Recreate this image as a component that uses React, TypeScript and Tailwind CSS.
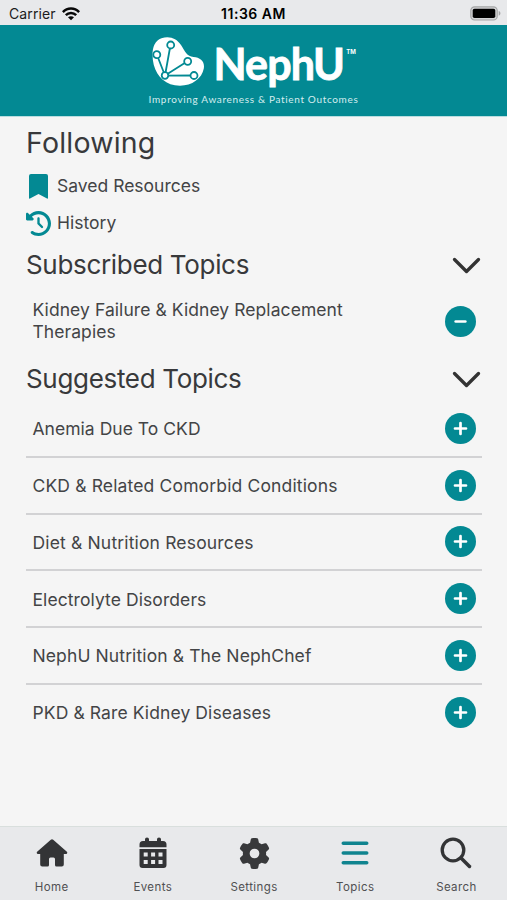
import type { ReactNode } from "react";
import { FaClockRotateLeft, FaGear } from "react-icons/fa6";

const suggested = [
  { title: "Anemia Due To CKD", tracking: "tracking-[0.03px]" },
  { title: "CKD & Related Comorbid Conditions", tracking: "tracking-[0.15px]" },
  { title: "Diet & Nutrition Resources", tracking: "tracking-[0.16px]" },
  { title: "Electrolyte Disorders", tracking: "tracking-[0.08px]" },
  { title: "NephU Nutrition & The NephChef", tracking: "tracking-[0.11px]" },
  { title: "PKD & Rare Kidney Diseases", tracking: "tracking-[0.1px]" },
];

function StatusBar() {
  return (
    <div className="grid h-[25px] shrink-0 grid-cols-3 items-center bg-[#e8e9eb] pt-[2px] text-[14px] leading-none text-[#1c1c1c]">
      <div className="flex items-center gap-[6px] pl-[9px]">
        <span className="tracking-[0.1px]">Carrier</span>
        <svg width="18" height="14" viewBox="0 0 18 14" fill="none" stroke="#080808" strokeWidth="2.5">
          <path d="M.9 5.1C5.3.4 12.7.4 17.1 5.1" />
          <path d="M3.8 8.1c2.9-2.9 7.5-2.9 10.4 0" />
          <path d="M6 10.2c1.7-1.4 4.3-1.4 6 0L9 13.3Z" fill="#080808" stroke="none" />
        </svg>
      </div>
      <span className="text-center font-semibold tracking-[0.5px] text-black">11:36 AM</span>
      <svg className="mr-[6px] justify-self-end" width="31" height="15" viewBox="0 0 31 15">
        <rect x=".8" y=".8" width="26.4" height="13.2" rx="3.8" fill="#d4d5d6" stroke="#a5a6a7" strokeWidth="1.2" />
        <rect x="2.7" y="2.7" width="22.6" height="9.4" rx="1.8" fill="#000" />
        <path d="M28.7 5.1c2.3.7 2.3 4 0 4.7Z" fill="#a5a6a7" />
      </svg>
    </div>
  );
}

function KidneyLogo() {
  return (
    <svg width="54" height="50" viewBox="0 0 54 50" className="shrink-0">
      <path
        d="M9.500 1.200C18-1.200 24.500 1.500 29 8C33 14.500 35 19.500 41.500 20C48.500 20.500 53 24.500 51.800 31.500C50 41.500 40 48.700 28 48.700C14 48.700 5 40 1.800 28C-.8 17 0 4.500 9.500 1.200Z"
        fill="#fff"
      />
      <g fill="#fff" stroke="#038993" strokeWidth="1.8">
        <path d="M13 38.500 4.800 17.500M13 38.500 18.500 8M13 38.500 35.500 24.300M13 38.700 42 38.500" />
        <circle cx="4.800" cy="17.700" r="3.500" />
        <circle cx="18.700" cy="8" r="3.500" />
        <circle cx="35.700" cy="24.300" r="3.500" />
        <circle cx="42" cy="38.500" r="3.500" />
        <circle cx="13" cy="38.500" r="3.300" />
      </g>
    </svg>
  );
}

function Header() {
  return (
    <header className="flex h-[92px] shrink-0 flex-col items-center border-b border-[#b9dde0] bg-[#038993] pt-[12px] text-white">
      <div className="flex h-[50px] w-[204px] items-start">
        <KidneyLogo />
        <span className="ml-[8px] mt-[2px] font-['Lato','Liberation_Sans',sans-serif] text-[43px] font-bold leading-[50px] tracking-[-0.9px] [-webkit-text-stroke:0.8px_white]">
          NephU
        </span>
        <span className="ml-[2px] mt-[12px] text-[6px] font-bold leading-none">TM</span>
      </div>
      <p className="mt-[5px] whitespace-nowrap font-['Lato','Liberation_Sans',sans-serif] text-[10px] leading-[14px] tracking-[0.66px] text-[#d5edef]">
        Improving Awareness &amp; Patient Outcomes
      </p>
    </header>
  );
}

function SectionTitle({ children }: { children: ReactNode }) {
  return (
    <div className="flex h-[34px] items-center justify-between">
      <h2 className="text-[26px] leading-[34px] tracking-[-0.32px]">{children}</h2>
      <svg width="30" height="18" viewBox="0 0 30 18" fill="none" stroke="#333" strokeWidth="3.300" strokeLinecap="round" strokeLinejoin="round">
        <path d="m2.500 3.500 12 12 12-12" />
      </svg>
    </div>
  );
}

function RoundButton({ kind }: { kind: "add" | "remove" }) {
  return (
    <button aria-label={kind} className="grid size-[31px] shrink-0 place-items-center rounded-full bg-[#038993]">
      <svg width="15" height="15" viewBox="0 0 15 15" stroke="#fff" strokeWidth="2.700" strokeLinecap="round">
        {kind === "add" ? <path d="M2 7.500h11M7.500 2v11" /> : <path d="M2.700 7.500h9.600" />}
      </svg>
    </button>
  );
}

function NavItem({ label, children }: { label: string; children: ReactNode }) {
  return (
    <button className="flex flex-1 flex-col items-center pt-[9px]">
      <span className="grid h-[34px] place-items-center">{children}</span>
      <span className="mt-[9px] text-[11.500px] leading-[16px] tracking-[0.4px] text-[#505052]">{label}</span>
    </button>
  );
}

export default function App() {
  return (
    <div className="flex h-[900px] w-[507px] flex-col overflow-hidden bg-[#f5f5f5] font-['Inter','Liberation_Sans',sans-serif] text-[#38393b]">
      <StatusBar />
      <Header />
      <main className="flex-1 pr-[25px] pl-[26px] pt-[7px]">
        <h1 className="text-[28.500px] leading-[38px] tracking-[0.2px]">Following</h1>
        <div className="mt-[6px] flex h-[37px] items-center text-[17.500px] text-[#434446]">
          <svg className="mr-[9px] ml-[3px]" width="19" height="25" viewBox="0 0 19 25">
            <path d="M0 2q0-2 2-2h15q2 0 2 2v22q0 1-1 .6L9.500 20 1 24.600q-1 .4-1-.6Z" fill="#038993" />
          </svg>
          <span>Saved Resources</span>
        </div>
        <div className="flex h-[36px] items-center text-[17.500px] text-[#434446]">
          <FaClockRotateLeft className="mr-[6px] size-[25px] text-[#038993]" />
          <span>History</span>
        </div>
        <section className="mt-[7px]">
          <SectionTitle>Subscribed Topics</SectionTitle>
          <div className="mt-[17px] flex items-center justify-between pr-[6px] pl-[6.500px]">
            <p className="w-[340px] text-[17.500px] leading-[22px] tracking-[0.07px] text-[#434446]">Kidney Failure &amp; Kidney Replacement Therapies</p>
            <RoundButton kind="remove" />
          </div>
        </section>
        <section className="mt-[19px]">
          <SectionTitle>Suggested Topics</SectionTitle>
          <ul className="mt-[5px]">
            {suggested.map(({ title, tracking }) => (
              <li key={title} className="flex h-[56.800px] items-center justify-between border-b-2 border-[#d2d2d4] pr-[6px] pl-[6.500px] last:border-transparent">
                <span className={`pt-[2px] text-[17.500px] text-[#434446] ${tracking}`}>{title}</span>
                <RoundButton kind="add" />
              </li>
            ))}
          </ul>
        </section>
      </main>
      <nav className="flex h-[74px] shrink-0 border-t border-[#d9dfdd] bg-[#e8e9eb] pl-px">
        <NavItem label="Home">
          <svg width="32" height="28" viewBox="0 0 32 28" fill="#333436">
            <path d="M14.800.8q1.200-1 2.400 0L30.600 12.600q1.100 1 .4 1.800-.5.700-1.600.600h-1.600v10.500q0 2-2 2h-5.300q-1.500 0-1.500-1.500v-6q0-1.500-1.500-1.500h-3q-1.500 0-1.500 1.500v6q0 1.500-1.500 1.500H6.200q-2 0-2-2V15H2.600q-1.100 0-1.600-.6-.7-.8.4-1.800Z" />
          </svg>
        </NavItem>
        <NavItem label="Events">
          <svg width="28" height="32" viewBox="0 0 28 32">
            <path d="M6 2.200q0-1.700 2-1.700t2 1.700V4h8V2.200q0-1.700 2-1.700t2 1.700V4h2q3.500 0 3.500 3.500v2.700H.500V7.500Q.500 4 4 4h2ZM.500 12h27v16q0 3-3 3h-21q-3 0-3-3Z" fill="#333436" />
            <path d="M4.700 15.500h4v4h-4Zm7.400 0h4v4h-4Zm7.400 0h4v4h-4ZM4.700 23h4v4h-4Zm7.400 0h4v4h-4Zm7.400 0h4v4h-4Z" fill="#e8e9eb" />
          </svg>
        </NavItem>
        <NavItem label="Settings">
          <FaGear className="size-[31px]" />
        </NavItem>
        <NavItem label="Topics">
          <svg width="28" height="24" viewBox="0 0 28 24" stroke="#10848f" strokeWidth="3.600" strokeLinecap="round">
            <path d="M2.300 2.300h23.400M2.300 12h23.400M2.300 21.700h23.400" />
          </svg>
        </NavItem>
        <NavItem label="Search">
          <svg width="32" height="32" viewBox="0 0 32 32" fill="none" stroke="#333436" strokeLinecap="round">
            <circle cx="13" cy="13" r="10.800" strokeWidth="3.300" />
            <path d="m21 21 8.500 8.500" strokeWidth="3.500" />
          </svg>
        </NavItem>
      </nav>
    </div>
  );
}
